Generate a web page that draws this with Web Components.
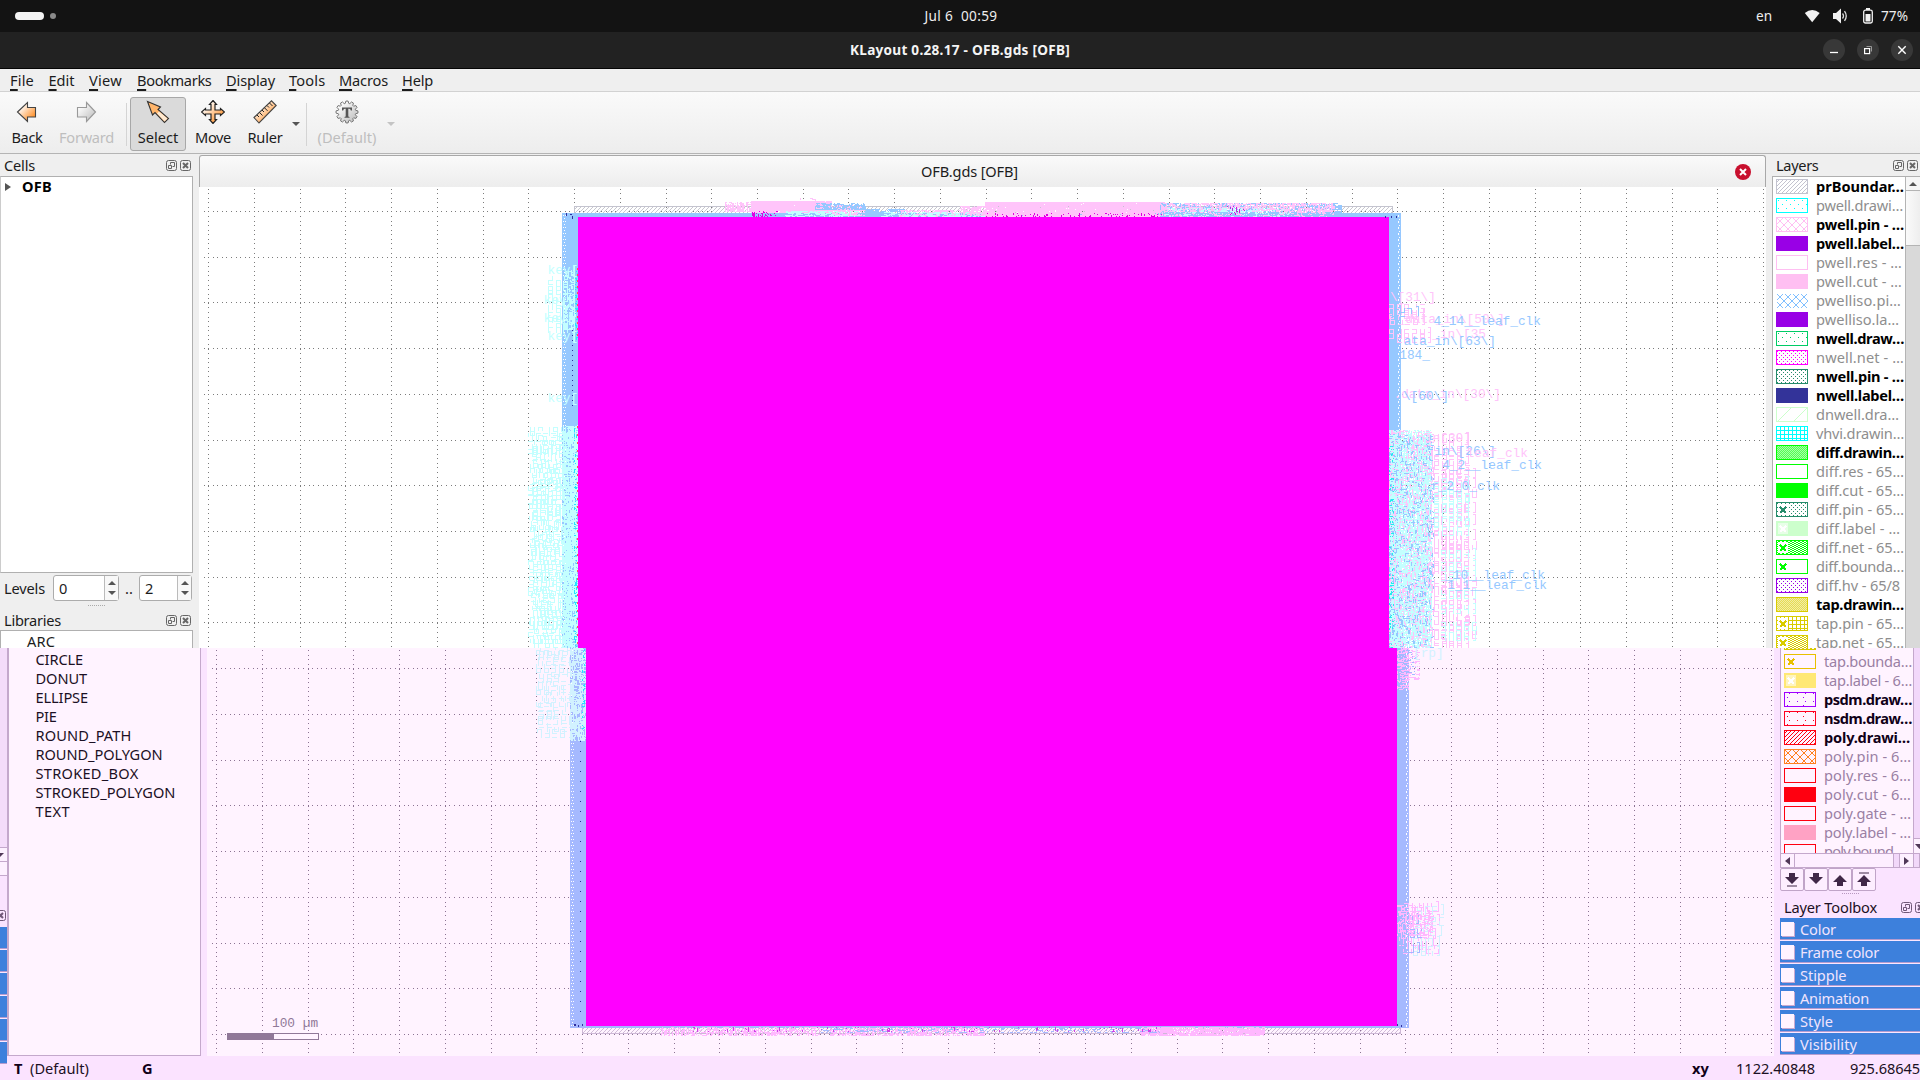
<!DOCTYPE html>
<html lang="en">
<head>
<meta charset="utf-8">
<title>KLayout 0.28.17 - OFB.gds [OFB]</title>
<style>
html,body{margin:0;padding:0}
body{width:1920px;height:1080px;overflow:hidden;background:#efefef;font:14.6px/19px "Noto Sans","Open Sans",sans-serif;color:#1c1c1c;display:flex;flex-direction:column}
</style>
</head>
<body>
<desktop-panel></desktop-panel>
<title-bar></title-bar>
<menu-bar></menu-bar>
<tool-bar></tool-bar>
<upper-area></upper-area>
<lower-area></lower-area>
<status-bar></status-bar>
<script>
const define=(name,render)=>customElements.define(name,class extends HTMLElement{
  connectedCallback(){ if(!this.shadowRoot){ this.attachShadow({mode:'open'}); this.shadowRoot.innerHTML=render(this); } }
});
const F=(w,t,c='')=>`<fit-text w="${w}" ${c}>${t}</fit-text>`;

/* Text run tightened or widened to a given advance width */
customElements.define('fit-text',class extends HTMLElement{
  connectedCallback(){
    if(this.shadowRoot)return;
    this.attachShadow({mode:'open'}).innerHTML='<style>:host{display:inline-block;white-space:pre;flex:none}span{display:inline-block}</style><span><slot></slot></span>';
    const w=+this.getAttribute('w'), s=this.shadowRoot.querySelector('span');
    const n=this.textContent.length;
    s.style.letterSpacing=((w-s.getBoundingClientRect().width)/n)+'px';
  }
});

define('desktop-panel',()=>`<style>
:host{display:flex;height:32px;background:#131313;color:#eee;align-items:center;flex:none;font-size:13.6px}
.l,.r{flex:1;display:flex;align-items:center}
.pill{width:29px;height:8px;border-radius:4px;background:#f4f4f4;margin-left:15px}
.dot{width:6px;height:6px;border-radius:3px;background:#8a8a8a;margin-left:6px}
.r{justify-content:flex-end}
svg{display:block;flex:none}
.c{padding:0 0 2px 2px}
.r fit-text{margin-top:-1px}
</style><div class="l"><div class="pill"></div><div class="dot"></div></div>
<div class="c">${F(73,'Jul 6  00:59')}</div>
<div class="r">${F(16,'en')}
<svg width="17" height="14" viewBox="0 0 17 14" style="margin-left:32px"><path d="M0.8 4Q8.200 -2.200 15.700 4L8.200 13.200Z" fill="#f2f2f2"/></svg>
<svg width="16" height="16" viewBox="0 0 16 16" style="margin-left:11px"><path d="M1 5h3l5-4.500v15L4 11H1z" fill="#f2f2f2"/><path d="M10.500 5.500q2 2.500 0 5M12.500 3.200q3.500 4.800 0 9.600" fill="none" stroke="#ddd" stroke-width="1.300"/></svg>
<svg width="10" height="16" viewBox="0 0 10 16" style="margin-left:15px;margin-right:8px"><rect x="0.700" y="2.200" width="8.600" height="12.800" rx="1.800" fill="none" stroke="#f2f2f2" stroke-width="1.300"/><path d="M3 0h4v2H3zM2.500 6h5v7.500h-5z" fill="#f2f2f2"/></svg>
${F(27,'77%')}<span style="width:12px"></span></div>`);

define('title-bar',()=>`<style>
:host{display:flex;height:36px;background:#222;border-bottom:1px solid #050505;color:#f4f4f4;align-items:center;flex:none;font-weight:700;font-size:13.6px}
.s{flex:1;display:flex;justify-content:flex-end;gap:12px;padding-right:7px}
.s:first-of-type{padding-right:7px}
svg{display:block}
fit-text{margin-top:-2px}
</style><div class="s"></div>${F(220,'KLayout 0.28.17 - OFB.gds [OFB]')}
<div class="s">
<svg width="22" height="22"><circle cx="11" cy="11" r="11" fill="#383838"/><path d="M7 13.500h8" stroke="#fff" stroke-width="1.300"/></svg>
<svg width="22" height="22"><circle cx="11" cy="11" r="11" fill="#383838"/><rect x="7.600" y="9.600" width="5" height="5" fill="none" stroke="#fff" stroke-width="1.200"/><path d="M9.500 7.500h5v5" fill="none" stroke="#999" stroke-width="1"/></svg>
<svg width="22" height="22"><circle cx="11" cy="11" r="11" fill="#383838"/><path d="M7.300 7.300l7.400 7.400M14.700 7.300l-7.400 7.400" stroke="#fff" stroke-width="1.400"/></svg>
</div>`);

define('menu-bar',()=>`<style>
:host{display:flex;height:23px;background:#efefef;border-bottom:1px solid #d2d2d2;box-sizing:border-box;flex:none;padding:2px 0 0 10px}
u{text-decoration-thickness:1.500px;text-underline-offset:3px}
</style>${[['File',24,14.500],['Edit',26,14.500],['View',33,15],['Bookmarks',74.500,14.500],['Display',49,14],['Tools',36.500,13.500],['Macros',49,14],['Help',31,0]].map(([t,w,g])=>`<span style="margin-right:${g}px">${F(w,`<u>${t[0]}</u>${t.slice(1)}`)}</span>`).join('')}`);

define('tool-bar',()=>{
const or='<linearGradient id="g" x1="0" y1="0" x2="1" y2="1"><stop offset="0.200" stop-color="#fff"/><stop offset="0.800" stop-color="#ff9838"/></linearGradient>';
const gr='<linearGradient id="h" x1="0" y1="0" x2="1" y2="1"><stop offset="0.200" stop-color="#fafafa"/><stop offset="1" stop-color="#b8b8b8"/></linearGradient>';
let gear='';for(let i=0;i<12;i++){const a=i*Math.PI/6;for(const [r,d] of [[8.800,-.2],[11,-.1],[11,.1],[8.800,.2]])gear+=(gear?'L':'M')+(12+r*Math.sin(a+d)).toFixed(2)+' '+(12-r*Math.cos(a+d)).toFixed(2);}
const b=(w,cls,svg,t,tw)=>`<div class="b ${cls}" style="width:${w}px"><svg width="24" height="24" viewBox="0 0 24 24"><defs>${or}${gr}</defs>${svg}</svg>${F(tw,t)}</div>`;
return `<style>
:host{display:flex;height:62px;background:linear-gradient(#fafafa,#ededed);border-bottom:1px solid #b4b4b4;box-sizing:border-box;flex:none;padding:5px 0 0 0}
.b{height:54px;box-sizing:border-box;border:1px solid transparent;display:flex;flex-direction:column;align-items:center;padding-top:2px;gap:4px}
.on{background:#dadada;border-color:#a8a8a8;border-radius:3px}
.off{color:#bebebe}
.sep{width:1px;height:43px;background:#d4d4d4;margin-top:6px}
.ar{border:4px solid transparent;border-top-color:#555;border-bottom:0;height:0;margin-top:25px}
svg{flex:none}
</style>
${b(54,'','<path d="M2.500 12L12.500 2.500V7.500H20.500V17H12.500V21.500Z" fill="url(#g)" stroke="#444" stroke-width="1.100"/>','Back',31)}
${b(65,'off','<path d="M20.500 12L11.500 2.500V7.500H2.500V17H11.500V21.500Z" fill="url(#h)" stroke="#999" stroke-width="1.100"/>','Forward',55)}
<div class="sep" style="margin-left:7px;margin-right:3px"></div>
${b(56,'on','<path d="M1.500 1.500L14.500 7L12 9.500L22.500 18.500L18.500 22.500L9 12.500L6.500 15Z" fill="#ffb56b" stroke="#333" stroke-width="1.100"/><path d="M13 11.500L21.500 18.500L18.500 21.500L11 13.500Z" fill="#ffe9d0"/>','Select',40.500)}
${b(54,'','<path d="M12 0.500L15.500 4.500H14V10H19.500V8.500L23.500 12L19.500 15.500V14H14V19.500H15.500L12 23.500L8.500 19.500H10V14H4.500V15.500L0.500 12L4.500 8.500V10H10V4.500H8.500Z" fill="url(#g)" stroke="#222" stroke-width="1.200"/>','Move',36)}
${b(50,'','<path d="M1 17.500L18.500 0.800L23.200 5.500L6 23Z" fill="url(#g)" stroke="#444" stroke-width="1.100"/><path d="M4 15l2 2M6.500 12.500l3 3M9 10l2 2M11.500 7.800l3 3M14 5.500l2 2M16.500 3l3 3" stroke="#222" stroke-width="1"/>','Ruler',35)}
<div class="ar" style="margin-left:2px"></div><div class="sep" style="margin-left:6px"></div>
${b(80,'off',`<path d="${gear}Z" fill="url(#h)" stroke="#777" stroke-width="1"/><path d="M7 7.500h10v3h-1.200q-.3-1.700-1.500-1.700h-1V16.500l1.200.5v.7H9.500V17l1.200-.5V8.800h-1q-1.200 0-1.500 1.700H7z" fill="#555"/>`,'(Default)',59)}
<div class="ar" style="border-top-color:#c4c4c4"></div>`});

const floatIcon=c=>`<svg width="11" height="11"><rect x=".5" y=".5" width="10" height="10" rx="2" fill="none" stroke="${c}"/><path d="M2.500 5.500h3v3h-3zM4.500 4.500v-2h4v4h-2" fill="none" stroke="${c}"/></svg>`;
const closeIcon=c=>`<svg width="11" height="11"><rect x=".5" y=".5" width="10" height="10" rx="2" fill="none" stroke="${c}"/><path d="M3 3l5 5M8 3l-5 5" stroke="${c}" stroke-width="2"/></svg>`;
/* Dock caption with float and close buttons */
define('dock-title',el=>{const c=el.getAttribute('ink')||'#666';return `<style>
:host{display:flex;align-items:center;height:22px;flex:none;box-sizing:border-box;white-space:pre}
i{flex:1}svg{display:block;margin-left:3px;flex:none}
</style><slot></slot><i></i>${floatIcon(c)}${closeIcon(c)}`});

define('spin-box',()=>`<style>
:host{display:flex;box-sizing:border-box;height:26px;border:1px solid #acacac;border-radius:3px;background:#fff;padding-left:5px;align-items:center;justify-content:space-between}
.s{width:13px;height:24px;border-left:1px solid #bbb;display:flex;flex-direction:column;justify-content:center;align-items:center;gap:6px;background:#f8f8f8}
.s b{border:4px solid transparent}.u{border-bottom-color:#555!important;border-top:0!important}.d{border-top-color:#555!important;border-bottom:0!important}
</style><slot></slot><div class="s"><b class="u"></b><b class="d"></b></div>`);

/* Layer list entry: name, bold, width, colour, stipple, cross mark */
const LAYERS=[
['prBoundar…',1,88,'#c3c3cf','hatch'],['pwell.drawi…',0,87,'#00ffff','sparse'],['pwell.pin - …',1,88,'#ffbff2','cross'],['pwell.label…',1,88,'#9900e6','solid'],
['pwell.res - …',0,86,'#ffbff2','none'],['pwell.cut - …',0,86,'#ffbff2','solid'],['pwelliso.pi…',0,85,'#80bfff','crossnf'],['pwelliso.la…',0,83,'#9900e6','solid'],
['nwell.draw…',1,88,'#00cc66','sparse'],['nwell.net - …',0,88,'#ff00ff','dots'],['nwell.pin - …',1,88,'#268c6b','dots'],['nwell.label…',1,88,'#333399','solid'],
['dnwell.dra…',0,83,'#ccffcc','wide'],['vhvi.drawin…',0,88,'#00ffff','grid'],['diff.drawin…',1,88,'#00ff00','dense'],['diff.res - 65…',0,88,'#00ff00','none'],
['diff.cut - 65…',0,88,'#00ff00','solid'],['diff.pin - 65…',0,88,'#268c6b','dots','x'],['diff.label - …',0,84,'#ccffcc','solid','w'],['diff.net - 65…',0,88,'#00ff00','check','x'],
['diff.bounda…',0,88,'#00ff00','none','x'],['diff.hv - 65/8',0,84,'#9900e6','dots'],['tap.drawin…',1,88,'#d9cc00','dense'],['tap.pin - 65…',0,88,'#d9cc00','grid','x'],['tap.net - 65…',0,88,'#d9cc00','check','x'],
['tap.bounda…',0,88,'#e8c000','none','x'],['tap.label - 6…',0,88,'#ffe875','solid','w'],['psdm.draw…',1,88,'#a000ff','sparse2'],['nsdm.draw…',1,88,'#ff0020','sparse2'],
['poly.drawi…',1,86,'#ff0010','hatch'],['poly.pin - 6…',0,87,'#ff8020','cross'],['poly.res - 6…',0,87,'#ff0010','none'],['poly.cut - 6…',0,87,'#ff0010','solid'],
['poly.gate - …',0,87,'#ff0010','none'],['poly.label - …',0,87,'#ffa2c4','solid'],['poly.bound…',0,80,'#ff0010','none']];
const stip=(k,c)=>({
 hatch:[4,4,`<path d="M0 3h1v1H0zM1 2h1v1H1zM2 1h1v1H2zM3 0h1v1H3z" fill="${c}"/>`],
 wide:[16,16,`<path d="M0 16L16 0" stroke="${c}"/>`],
 sparse:[8,8,`<path d="M2 2h1v1H2zM6 6h1v1H6z" fill="${c}"/>`],
 sparse2:[16,8,`<path d="M5 1h1v1H5zM13 1h1v1H13zM2 9h1v1H2zM3 5h1v1H3z" fill="${c}"/>`],
 cross:[8,8,`<path d="M0 0L8 8M8 0L0 8" stroke="${c}" stroke-width="1"/>`],
 crossnf:[8,8,`<path d="M0 0L8 8M8 0L0 8" stroke="${c}" stroke-width="1"/>`],
 dots:[4,4,`<path d="M1 1h1v1H1zM3 3h1v1H3z" fill="${c}"/>`],
 check:[4,2,`<path d="M0 0h2v1H0zM2 1h2v1H2z" fill="${c}"/>`],
 dense:[2,2,`<rect width="2" height="2" fill="${c}" opacity=".35"/><path d="M0 0h1v1H0zM1 1h1v1H1z" fill="${c}" opacity=".5"/>`],
 grid:[4,4,`<path d="M0 0h4v1H0zM0 0h1v4H0z" fill="${c}"/>`]}[k]);
define('layer-row',el=>{
 const [t,b,w,c,k,m]=LAYERS[+el.getAttribute('n')], s=stip(k,c), bare=el.hasAttribute('bare');
 return `<style>:host{display:flex;height:19px;align-items:center;padding-left:3px;color:var(--dim,#8e8e8e);flex:none}
 :host([b]){color:var(--ink,#000);font-weight:700}svg{display:block;flex:none;margin-right:8px}</style>
 <svg width="32" height="15" shape-rendering="crispEdges"><defs>${s?`<pattern id="p" width="${s[0]}" height="${s[1]}" patternUnits="userSpaceOnUse">${s[2]}</pattern>`:''}</defs>
 <rect x="${k=='crossnf'?1:.5}" y=".5" width="31" height="14" fill="${k=='solid'?c:s?'url(#p)':'none'}" ${k=='crossnf'?'':`stroke="${c}"`}/>
 ${m?`<rect x="2" y="2" width="10" height="11" fill="${m=='x'?'var(--paper,#fff)':'#fff8'}"/><path d="M4 5l6 6M10 5l-6 6" stroke="${m=='x'?c:'#fff'}" stroke-width="2"/>`:''}</svg>${bare?'':F(w,t)}`});
const rows=(a,b)=>{let s='';for(let i=a;i<b;i++)s+=`<layer-row n="${i}" ${LAYERS[i][1]?'b':''}></layer-row>`;return s};

/* Layout drawing; the lower band is displaced 8px to the right */
define('layout-view',el=>{
 const low=el.hasAttribute('low'), X0=low?207:199, Y0=low?648:187, H=low?408:461, sh=low?8:0;
 let seed=7;const R=()=>(seed=(seed*16807)%2147483647)/2147483647;
 const out=[];
 const P=(d,c)=>out.push(`<path d="${d}" fill="${c}"/>`);
 const rect=(x,y,w,h,c)=>out.push(`<rect x="${x}" y="${y}" width="${w}" height="${h}" fill="${c}"/>`);
 const noise=(x0,y0,x1,y1,den,c,lh=4,lv=4)=>{let d='';const n=(x1-x0)*(y1-y0)*den/4|0;
  for(let i=0;i<n;i++){const x=x0+R()*(x1-x0)|0,y=y0+R()*(y1-y0)|0;
   if(R()<.5){const l=Math.min(1+R()*lh|0,x1-x);d+=`M${x} ${y}h${l}v1h-${l}z`}else{const l=Math.min(1+R()*lv|0,y1-y);d+=`M${x} ${y}h1v${l}h-1z`}}
  P(d,c)};
 /* stacked label marks too dense to read: random seven-segment cells */
 const marks=(x,y0,y1,n,step,c,jit=0)=>{let d='';
  for(let y=y0;y<y1;y+=step*(.7+R()*.6)){const o=R()*jit|0,yy=y|0;
   for(let i=0;i<n;i++){const a=Math.round(x+o+i*7.68);
    if(i==n-1&&R()<.7){d+=`M${a+1} ${yy-2}h3v1h-3zM${a+3} ${yy-2}h1v11h-1zM${a+1} ${yy+8}h3v1h-3z`;continue}
    [[0,0,5,1],[0,4,5,1],[0,8,5,1],[0,0,1,4],[4,0,1,4],[0,4,1,5],[4,4,1,5]].forEach(([p,q,w,h])=>{if(R()<.6)d+=`M${a+p} ${yy+q}h${w}v${h}h-${w}z`})}}
  P(d,c)};
 const T=(x,y,t,c)=>out.push(`<text x="${x}" y="${y}" fill="${c}">${t}</text>`);
 const E=(x,y,t,c)=>T(x-t.length*7.68,y,t,c);
 let g='';
 for(let i=0;i<35;i++){const x=Math.round(208.2+45.735*i)+sh;for(let y=211-45.7+.5;y<1056;y+=4.57){if(y>=Y0)g+=`M${x} ${Math.round(y)}h1v1h-1z`}}
 for(let j=0;j<19;j++){const y=Math.round(211+45.72*j);if(y<Y0||y>Y0+H)continue;for(let x=203.6+sh;x<1766+sh;x+=4.5735)g+=`M${Math.round(x)} ${y}h1v1h-1z`}
 const B=low?'#a5b9ff':'#96c8ff',C=low?'#d2f2ff':'#c4ffff',K=low?'#ffb8ff':'#ffc4fa';
 P(g,low?'#8c7494':'#7c7c7c');
 out.push(`<defs><pattern id="h" width="4" height="4" patternUnits="userSpaceOnUse"><path d="M0 3h1v1H0zM1 2h1v1H1zM2 1h1v1H2zM3 0h1v1H3z" fill="${low?'#d0bcd8':'#c8c8d0'}"/></pattern></defs>`);
 out.push(`<rect x="${574.5+sh}" y="206.500" width="818" height="827" fill="url(#h)" stroke="${low?'#cdb8d6':'#c4c4cf'}"/>`);
 rect(562+sh,213,839,815,B);
 P(Array.from({length:136},(_,i)=>`M${563+sh} ${215+i*6}h1v1h-1zM${565+sh} ${215+i*6}h1v1h-1zM${564+sh} ${218+i*6}h1v1h-1zM${1398+sh} ${215+i*6}h1v2h-1zM${1399+sh} ${219+i*6}h1v1h-1z`).join(''),'#fff');
 if(!low){
  for(const y of [274,304,322,340,402])T(y==304||y==322?543.5:547.5,y,'key[',C);
  marks(548,276,328,4,6,C,1);noise(564,270,574,330,.8,C,3,6);P('M574 265h1v78h-1z',C);
  noise(575,270,578,340,.8,'#28e4ff',2,3);
  marks(528,427,641,7,5.500,C,6);marks(532,436,641,6,8,C,5);noise(562,426,578,648,1.5,C,5,6);noise(574,426,577,648,.5,'#28e4ff',2,3);
  noise(725,202,752,212,2,K,2,9);noise(751,201,832,213,7,K,5,4);noise(830,205,865,216,2.5,K);noise(752,211,778,217,.9,'#e000e0',1,4);
  noise(800,198,816,203,.7,K,5,3);noise(815,203,866,210,2.2,B);noise(785,211,860,217,1.5,C,5,1);noise(862,209,905,217,2,B,5,1);
  noise(900,210,960,217,1.6,K,5,2);noise(880,212,990,217,1.4,C,5,1);noise(960,206,985,216,2,K,6,2);noise(985,202,1165,217,6,K,6,4);noise(985,213,1165,217,.45,'#e000e0',1,3);
  noise(1160,203,1342,216,1.3,B,6,4);noise(1160,203,1335,217,1.5,K,4,4);noise(1165,208,1290,217,.8,C,4,2);noise(1225,205,1245,217,.25,'#c020e0',1,5);noise(1160,212,1342,217,1.3,B,6,1);
 }else{
  marks(536,646,732,5,6,C,4);noise(570,648,586,741,1.5,C,5,6);noise(582,648,585,730,.5,'#28e4ff',2,3);
 }
 P(Array.from({length:low?28:16},(_,i)=>`M${572+sh} ${low?741+i*10:330+i*5}h1v1h-1z`).join(''),'#303098');
 rect(578+sh,217,811,809,'#ff00ff');
 if(!low){
  let d='';for(let y=268;y<340;y+=6)d+=`M577 ${y}h1v2h-1z`;for(let y=426;y<648;y+=8)d+=`M577 ${y}h1v2h-1z`;P(d,'#ff5a50');
  P('M566 213h1v3h-1zM570 214h2v1h-2zM1385 216h1v2h-1zM1391 216h1v2h-1zM1396 216h1v2h-1zM572 216h1v3h-1z','#3030a0');
  marks(1389,304,314,5,7,K);marks(1390,316,320,5,7,K);marks(1389,329,337,6,5,K,2);marks(1392,308,312,4,6,B);
  E(1436,301,'\\[31\\]',K);E(1505,323,'_data_in\\[50\\]',K);E(1541,325,'4_14__leaf_clk',B);
  E(1486,338,'_in\\[35',K);E(1496,345,'ata_in\\[63\\]',B);E(1430,359,'184_',B);
  E(1501,398,'.data_in\\[30\\]',K);E(1449,400,'\\[60\\]',B);
  marks(1434,434,643,5,7,K);marks(1441,470,640,5,13,K);marks(1434,478,530,5,8,C);marks(1441,550,643,5,14,C);
  marks(1389,434,643,6,7,K,3);noise(1389,430,1432,648,2,C,4,5);marks(1390,436,643,5,5,C,6);noise(1389,430,1432,648,.4,K,3,5);noise(1389,435,1434,648,.3,B,3,4);noise(1389,445,1394,648,.35,'#20eeee',3,2);
  E(1471,442,'in[30]',K);E(1496,455,'in\\[26\\]',B);E(1528,457,'leaf_clk',K);E(1542,469,'4_2__leaf_clk',B);
  E(1500,490,'r_2_0_clk',B);E(1545,579,'_10__leaf_clk',B);E(1547,589,'1_1__leaf_clk',B);
 }else{
  noise(1397,648,1409,690,1.2,K,6,2);noise(1403,650,1420,680,.7,K,7,1);noise(1402,650,1416,676,.4,B,6,1);T(1413,657,'[rp]',C);
  marks(1398,903,950,5,7,K,8);marks(1410,906,955,4,9,C,8);marks(1400,915,952,3,14,B,4);noise(1397,905,1432,936,.7,K,4,4);
  noise(660,1027,820,1036,1.2,K,3,5);noise(830,1027,985,1036,1.6,K,3,5);noise(1140,1027,1265,1036,3,K,6,3);noise(820,1027,1160,1033,.5,B,4,1);noise(690,1027,1160,1032,.15,'#d040e8',1,5);
  P('M574 1024h2v2h-2zM578 1025h1v2h-1zM582 1024h1v2h-1zM1397 1024h1v2h-1zM1401 1025h1v2h-1z','#3030a0');
  out.push(`<rect x="227.500" y="1033.500" width="91" height="6" fill="#fff3ff" stroke="#907898"/><rect x="227" y="1033" width="47" height="7" fill="#907898"/><text x="272" y="1027" fill="#907898">100 µm</text>`);
 }
 return `<style>:host{display:block;flex:none;width:1567px;height:${H}px;background:${low?'#fff3ff':'#fff'}}svg{display:block}text{font:12.8px "Liberation Mono",monospace;white-space:pre}</style>
 <svg width="1567" height="${H}" viewBox="${X0} ${Y0} 1567 ${H}" shape-rendering="crispEdges">${out.join('')}</svg>`});

/* Everything above the tear line */
define('upper-area',()=>`<style>
:host{display:flex;height:494px;flex:none;background:#efefef;overflow:hidden}
.l{width:193px;display:flex;flex-direction:column;margin-right:6px;flex:none}
.l>*{flex:none}
.frame{box-sizing:border-box;border:1px solid #b0b0b0;background:#fff}
.cells{height:397px;border-left-color:#ccc;padding-left:4px}
.cells div{display:flex;align-items:center;height:19px;font-weight:700;color:#000}
.tri{border:4px solid transparent;border-left:6px solid #555;border-right:0;margin-right:11px}
.lev{display:flex;align-items:center;height:30px;padding-left:4px}
.grip{height:6px;display:flex;justify-content:center}.grip::after{content:"";width:17px;border-top:1px dotted #aaa;margin-top:2px;height:0}
.libs{height:18px;padding-left:26px;border-bottom:0;line-height:20px;margin-top:-1px}
.c{width:1567px;flex:none;display:flex;flex-direction:column}
.tab{height:32px;margin-top:1px;box-sizing:border-box;border:1px solid #a8a8a8;border-bottom:0;border-radius:3px 3px 0 0;background:linear-gradient(#fafafa,#ededed);display:flex;align-items:center}
.tab i{flex:1}
.tab .x{flex:none;width:747px;box-sizing:border-box;display:flex;justify-content:flex-end;padding-right:14px}
.r{margin-left:6px;width:148px;display:flex;flex-direction:column;flex:none}
.body{display:flex;border:1px solid #b0b0b0;border-right:0;border-bottom:0;height:471px;background:#fff;overflow:hidden}
.list{width:132px;flex:none}
.sb{width:15px;border-left:1px solid #b4b4b4;background:#d9d9d9;box-sizing:border-box}
.sb .a{height:13px;background:#f6f6f6;border-bottom:1px solid #b4b4b4;display:flex;justify-content:center;align-items:center}
.sb .a::after{content:"";border:4px solid transparent;border-top:0;border-bottom-color:#555}
.sb .t{height:54px;background:linear-gradient(90deg,#fafafa,#eee);border-bottom:1px solid #b4b4b4}
</style>
<div class="l"><dock-title style="padding:0 2px 0 4px">${F(31,'Cells')}</dock-title>
<div class="frame cells"><div><span class="tri"></span>${F(30,'OFB')}</div></div>
<div class="lev">${F(41,'Levels')}<spin-box style="width:66px;margin-left:8px">0</spin-box><span style="width:20px;text-align:center;white-space:pre">..</span><spin-box style="width:53px">2</spin-box></div>
<div class="grip"></div><dock-title style="padding:0 2px 0 4px">${F(57,'Libraries')}</dock-title>
<div class="frame libs">${F(28,'ARC')}</div></div>
<div class="c"><div class="tab"><i></i>${F(97,'OFB.gds [OFB]')}<div class="x"><svg width="16" height="16"><circle cx="8" cy="8" r="8" fill="#c8102e"/><path d="M5 5l6 6M11 5l-6 6" stroke="#fff" stroke-width="2"/></svg></div></div><layout-view></layout-view></div>
<div class="r"><dock-title style="padding:0 2px 0 4px">${F(42.500,'Layers')}</dock-title><div class="body"><div class="list">${rows(0,25)}</div><div class="sb"><div class="a"></div><div class="t"></div></div></div></div>`);

define('check-row',()=>`<style>:host{display:flex;height:23px;box-sizing:border-box;background:#3d80dc;border-bottom:1px solid #fbe6ff;box-shadow:inset 0 -1px #b49cd0;align-items:center;color:#f1e4fc;flex:none;padding-left:1px}
i{width:13px;height:14px;background:#fff3ff;box-shadow:1px 1px #c8a8d0;margin-right:6px}</style><i></i><slot></slot>`);

/* Everything below the tear line: displaced and tinted */
define('lower-area',()=>{
const bt=(p)=>`<b><svg width="16" height="16" viewBox="0 0 16 16"><path d="${p}" fill="#402848"/></svg></b>`;
return `<style>
:host{display:flex;height:408px;flex:none;background:#fae3ff;color:#1c1024;overflow:hidden;--ink:#100018;--dim:#9a80a4;--paper:#fff3ff}
.strip{width:8px;flex:none;display:flex;flex-direction:column;overflow:hidden;box-sizing:border-box;border-right:1px solid #c4a8cc}
.strip>*{flex:none;box-sizing:border-box}
.strip .w{height:14px;background:#fdf0ff;border-top:1px solid #c4a8cc;overflow:hidden}
.strip .w svg{display:block}
.strip .bl{height:23px;background:#3d80dc;border-bottom:1px solid #fbe6ff;box-shadow:inset 0 -1px #b49cd0}
.libs{width:193px;flex:none;box-sizing:border-box;background:#fff3ff;border:1px solid #c4a8cc;border-top:0;margin-right:6px;padding:2px 0 0 26.500px;display:flex;flex-direction:column;align-items:flex-start}
.libs fit-text{height:19px}
.r{width:140px;flex:none;margin-left:6px;display:flex;flex-direction:column;overflow:hidden}
.body{height:205px;display:flex;border-left:1px solid #c4a8cc;background:#fff3ff;overflow:hidden;flex:none}
.list{width:132px;flex:none;margin-top:-15px;display:block}
.sb{flex:1;border-left:1px solid #c4a8cc;background:#f2d8fa;display:flex;flex-direction:column;justify-content:flex-end}
.sb svg{display:block;background:#fdf0ff;border-top:1px solid #c4a8cc}
.hs{height:15px;box-sizing:border-box;display:flex;border:1px solid #c4a8cc;background:#f2d8fa;flex:none}
.hs span{width:13px;background:#fdf0ff;display:flex;align-items:center;justify-content:center}
.hs em{width:98px;background:#fdeeff;border:solid #c4a8cc;border-width:0 1px;margin-right:5px}
.hs span+em+span{border:solid #c4a8cc;border-width:0 1px}
.bs{display:flex;height:24px;flex:none}
.bs b{width:24px;height:23px;box-sizing:border-box;border:1px solid #c0a4c8;border-radius:2px;background:#fdeeff;display:flex;align-items:center;justify-content:center}
.grip{height:5px;flex:none;display:flex;justify-content:center}.grip::after{content:"";width:17px;border-top:1px dotted #b898c0;margin-top:1px;height:0}
</style>
<div class="strip"><div style="height:199px;background:#f4dcfa"></div><div class="w"><svg width="7" height="13"><path d="M-4 5h8l-4 4z" fill="#503858"/></svg></div><div class="w"></div><div style="border-top:1px solid #c4a8cc;height:35px"></div>
<svg width="7" height="11" viewBox="5 0 7 11" style="display:block"><rect x="0" y=".5" width="10.500" height="10" rx="2" fill="none" stroke="#705878"/><path d="M3 3l5 5M8 3l-5 5" stroke="#705878" stroke-width="2"/></svg><div style="height:6px"></div>
${'<div class="bl"></div>'.repeat(6)}</div>
<div class="libs">${[['CIRCLE',47.500],['DONUT',51.500],['ELLIPSE',52.500],['PIE',21],['ROUND_PATH',96],['ROUND_POLYGON',127],['STROKED_BOX',103],['STROKED_POLYGON',140],['TEXT',34.500]].map(([t,w])=>F(w,t)).join('')}</div>
<layout-view low></layout-view>
<div class="r"><div class="body"><div class="list"><layer-row n="24" bare></layer-row>${rows(25,36)}</div><div class="sb"><svg width="7" height="14"><path d="M1 5h9l-4.500 5z" fill="#503858"/></svg></div></div>
<div class="hs"><span><svg width="5" height="8"><path d="M5 0v8L0 4z" fill="#503858"/></svg></span><em></em><span><svg width="5" height="8"><path d="M0 0v8l5-4z" fill="#503858"/></svg></span></div>
<div class="bs">${bt('M5 1h6v4h4l-7 7-7-7h4zM3 13.500h10v1H3z')}${bt('M5 1h6v4h4l-7 7-7-7h4z')}${bt('M8 3l7 7h-4v4H5v-4H1z')}${bt('M8 3l7 7h-4v4H5v-4H1zM3 .5h10v1H3z')}</div>
<div class="grip"></div>
<dock-title ink="#705878" style="width:148px;height:21px;padding:0 2px 0 4px">${F(93,'Layer Toolbox')}</dock-title>
<check-row>${F(36,'Color')}</check-row>${[['Frame color',79],['Stipple',46.500],['Animation',69],['Style',33],['Visibility',57]].map(([t,w])=>`<check-row>${F(w,t)}</check-row>`).join('')}
</div>`});

define('status-bar',()=>`<style>
:host{display:flex;height:24px;flex:none;background:#fbe3ff;color:#1c1024;align-items:center;white-space:pre;overflow:hidden;position:relative;box-sizing:border-box}
b{color:#100018}.e{position:absolute;left:0;top:0;width:7px;height:7px;background:#3d80dc;border-bottom:1px solid #b49cd0}
</style><span class="e"></span><b style="margin-left:14px">${F(10,'T')}</b><span style="margin-left:6px">${F(59,'(Default)')}</span><b style="margin-left:53px">${F(11,'G')}</b><span style="flex:1"></span><b>${F(17,'xy')}</b><span style="margin-left:27px">${F(79,'1122.40848')}</span><span style="margin-left:35px">${F(70,'925.68645')}</span>`);
</script>
</body>
</html>
